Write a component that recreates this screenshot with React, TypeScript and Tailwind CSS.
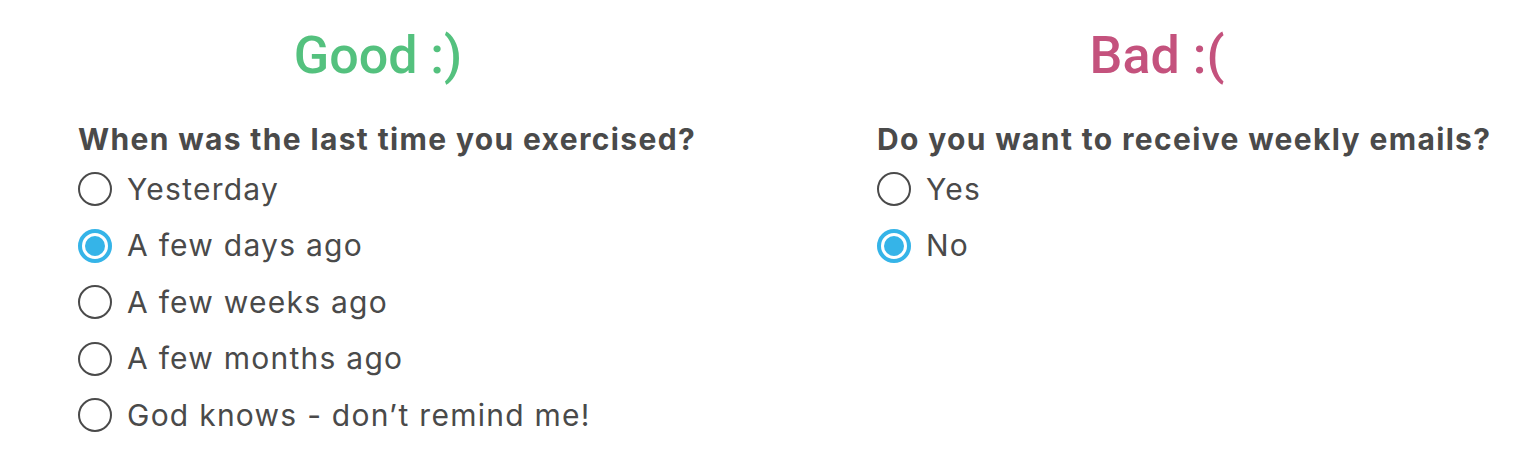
import React from 'react';

type Props = { label: string; checked?: boolean };

function Radio({ label, checked }: Props) {
    return (
        <div className="flex items-center gap-[15px] h-[56.5px]">
            {checked ? (
                <span className="w-[34px] h-[34px] rounded-full border-[4px] border-[#35b4e8] flex items-center justify-center">
                    <span className="w-[20px] h-[20px] rounded-full bg-[#35b4e8]" />
                </span>
            ) : (
                <span className="w-[34px] h-[34px] rounded-full border-[2.5px] border-[#4a4a4a]" />
            )}
            <span className="text-[30px] text-[#4a4a4a] tracking-[1.25px]">{label}</span>
        </div>
    );
}

export default function App() {
    return (
        <main className="w-[1536px] h-[470px] bg-white flex font-['Inter',sans-serif]">
            {/* Good */}
            <section className="pl-[78px] w-[877px] pt-[26px]">
                <h1 className="w-[600px] text-center h-[60px] leading-[60px] text-[52px] font-medium text-[#54c17e] font-['Roboto',sans-serif]">
                    Good :)
                </h1>
                <h2 className="mt-[33px] h-[40px] leading-[40px] text-[30px] font-bold text-[#4a4a4a] tracking-[1.35px]">
                    When was the last time you exercised?
                </h2>
                <div className="mt-[2px] flex flex-col">
                    <Radio label="Yesterday" />
                    <Radio label="A few days ago" checked />
                    <Radio label="A few weeks ago" />
                    <Radio label="A few months ago" />
                    <Radio label="God knows - don’t remind me!" />
                </div>
            </section>

            {/* Bad */}
            <section className="pt-[26px]">
                <h1 className="w-[560px] text-center h-[60px] leading-[60px] text-[52px] font-medium text-[#c4527d] font-['Roboto',sans-serif]">
                    Bad :(
                </h1>
                <h2 className="mt-[33px] h-[40px] leading-[40px] text-[30px] font-bold text-[#4a4a4a] tracking-[1.35px]">
                    Do you want to receive weekly emails?
                </h2>
                <div className="mt-[2px] flex flex-col">
                    <Radio label="Yes" />
                    <Radio label="No" checked />
                </div>
            </section>
        </main>
    );
}
